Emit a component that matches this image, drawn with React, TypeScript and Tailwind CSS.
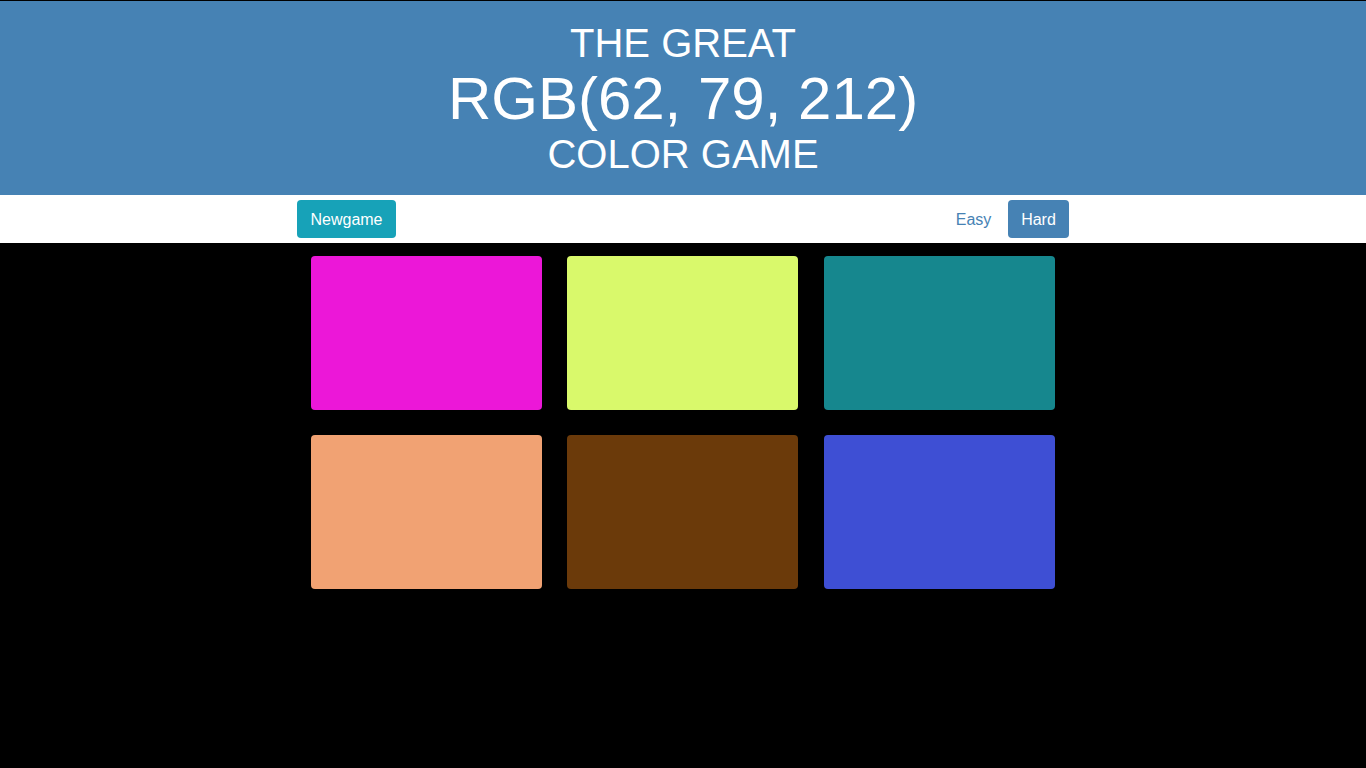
import { useState } from 'react';

const colors = [
  'rgb(236, 23, 216)',
  'rgb(217, 249, 107)',
  'rgb(22, 135, 142)',
  'rgb(241, 162, 115)',
  'rgb(107, 58, 10)',
  'rgb(62, 79, 212)',
];

const App = () => {
  const [mode, setMode] = useState<'easy' | 'hard'>('hard');

  const btn = 'h-[38px] rounded-[4px] border border-transparent pt-[2px] text-base';

  return (
    <div className="min-h-[768px] bg-black pt-px font-['Liberation_Sans',Arial,sans-serif]">
      <h1 className="bg-[#4682b4] py-[18px] text-center font-normal uppercase text-white">
        <div className="text-[40px] leading-[48px]">The Great</div>
        <div className="text-[60px] leading-[64px]">RGB(62, 79, 212)</div>
        <div className="text-[40px] leading-[46px]">Color Game</div>
      </h1>

      <div className="h-12 bg-white">
        <div className="mx-auto flex h-full w-[772px] items-center justify-between">
          <button className={btn + ' w-[99px] bg-[#17a2b8] text-white'}>Newgame</button>
          <div className="flex items-center gap-[4px]">
            <button
              onClick={() => setMode('easy')}
              className={btn + ' w-[61px]' + (mode === 'easy' ? ' bg-[#4682b4] text-white' : ' text-[#4682b4]')}
            >
              Easy
            </button>
            <button
              onClick={() => setMode('hard')}
              className={btn + ' w-[61px]' + (mode === 'hard' ? ' bg-[#4682b4] text-white' : ' text-[#4682b4]')}
            >
              Hard
            </button>
          </div>
        </div>
      </div>

      <div className="mx-auto grid w-[772px] grid-cols-[231px_231px_231px] gap-x-[25.4px] gap-y-[25px] px-[14px] pt-[13px]">
        {colors.slice(0, mode === 'easy' ? 3 : 6).map((c) => (
          <div key={c} className="h-[154px] rounded-[4px]" style={{ backgroundColor: c }} />
        ))}
      </div>
    </div>
  );
};

export default App;
